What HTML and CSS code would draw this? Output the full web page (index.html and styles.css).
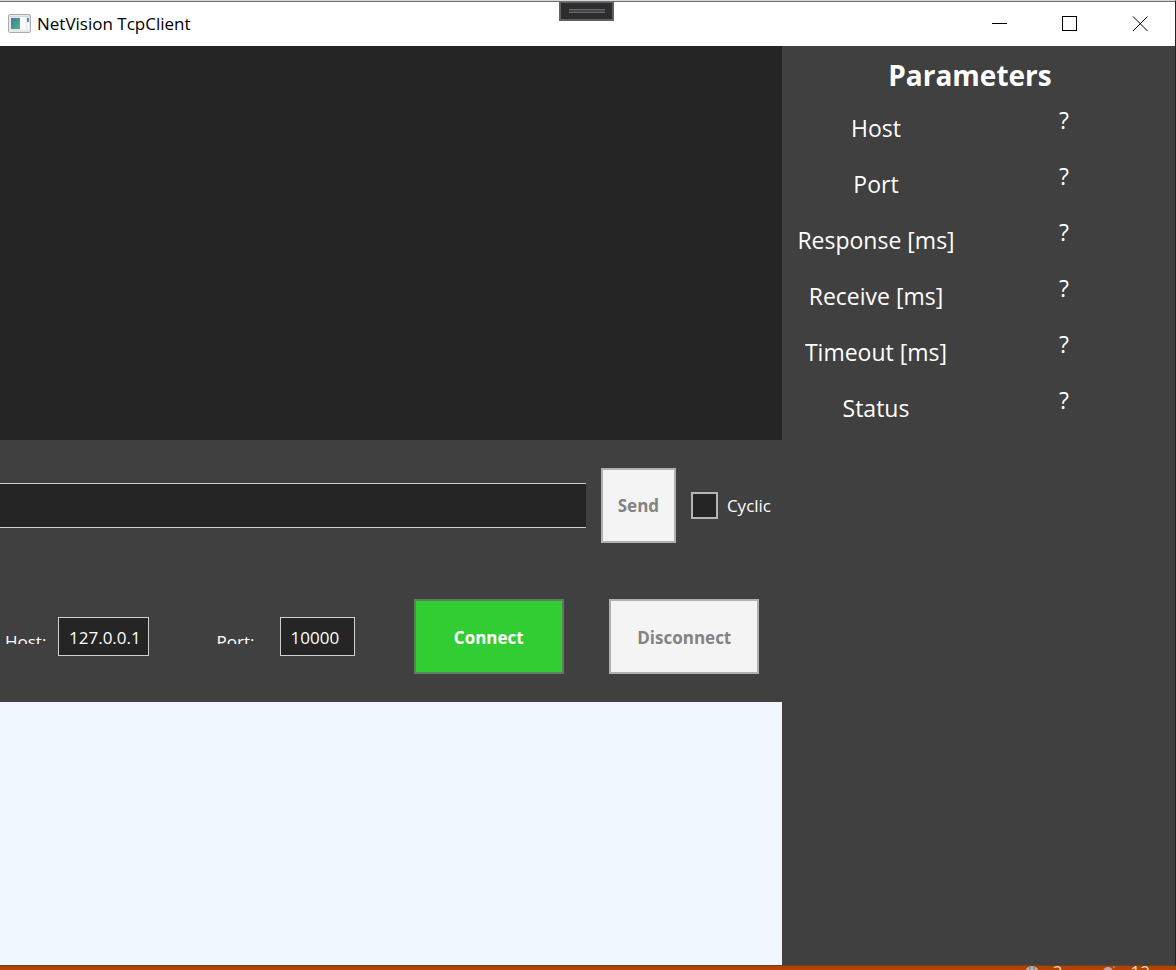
FILE: index.html
```html
<!DOCTYPE html>
<html lang="en">
<head>
<meta charset="utf-8">
<title>NetVision TcpClient</title>
<link rel="stylesheet" href="styles.css">
</head>
<body>
<div class="window">
  <header class="titlebar">
    <svg class="app-icon" width="24" height="20" viewBox="0 0 24 20" aria-hidden="true">
      <defs><linearGradient id="pane" x1="0" y1="0" x2="1" y2="1"><stop offset="0" stop-color="#4a78a0"/><stop offset="0.5" stop-color="#48988c"/><stop offset="1" stop-color="#5fb08c"/></linearGradient></defs>
      <rect x="0.5" y="0.5" width="22" height="18" rx="1.5" fill="#e6e8ea" stroke="#a9adb2"/>
      <rect x="2" y="2" width="19" height="1" fill="#d5d8dc"/>
      <rect x="3" y="4" width="9" height="11" fill="url(#pane)"/>
      <rect x="12" y="3" width="6" height="13" fill="#f8f8f8"/>
      <rect x="19" y="4" width="2" height="4" fill="#5f8f9f"/>
      <rect x="19" y="8" width="2" height="8" fill="#f4f5f6"/>
    </svg>
    <h1 class="title">NetVision TcpClient</h1>
    <div class="window-buttons">
      <button class="window-button" aria-label="Minimize"><svg width="16" height="16" viewBox="0 0 16 16"><path d="M0 7.5H15" stroke="#000"/></svg></button>
      <button class="window-button" aria-label="Maximize"><svg width="16" height="16" viewBox="0 0 16 16"><rect x="0.5" y="0.5" width="14" height="14" fill="none" stroke="#000"/></svg></button>
      <button class="window-button" aria-label="Close"><svg width="16" height="16" viewBox="0 0 16 16"><path d="M1 0.5L15.5 15M15.5 0.5L1 15" stroke="#000"/></svg></button>
    </div>
    <button class="debug-handle" aria-label="Expand toolbar"><span class="grip"></span></button>
  </header>
  <main class="content">
    <div class="left">
      <section class="log"></section>
      <form class="send-row">
        <input class="field message" type="text" aria-label="Message">
        <button class="button send" type="button" disabled>Send</button>
        <label class="cyclic"><input class="checkbox" type="checkbox"><span class="cyclic-text">Cyclic</span></label>
      </form>
      <form class="connect-row">
        <div class="cell host-cell">
          <label class="clipped" for="host">Host:</label>
          <input class="field host" id="host" type="text" value="127.0.0.1">
        </div>
        <div class="cell port-cell">
          <label class="clipped" for="port">Port:</label>
          <input class="field port" id="port" type="text" value="10000">
        </div>
        <div class="cell"><button class="button connect" type="button">Connect</button></div>
        <div class="cell"><button class="button disconnect" type="button" disabled>Disconnect</button></div>
      </form>
      <section class="output"></section>
    </div>
    <aside class="parameters">
      <h2 class="heading">Parameters</h2>
      <table class="values">
        <tr><th scope="row">Host</th><td>?</td></tr>
        <tr><th scope="row">Port</th><td>?</td></tr>
        <tr><th scope="row">Response [ms]</th><td>?</td></tr>
        <tr><th scope="row">Receive [ms]</th><td>?</td></tr>
        <tr><th scope="row">Timeout [ms]</th><td>?</td></tr>
        <tr><th scope="row">Status</th><td>?</td></tr>
      </table>
    </aside>
  </main>
</div>
<footer class="statusbar">
  <svg width="14" height="14" viewBox="0 0 14 14" aria-hidden="true"><circle cx="7" cy="7" r="7" fill="#b5b0b0"/><path d="M5 1v3M9 1v3" stroke="#777"/></svg>
  <span class="count">2</span>
  <svg class="second" width="14" height="14" viewBox="0 0 14 14" aria-hidden="true"><circle cx="5" cy="6" r="5" fill="#b5b0b0"/><path d="M11 0v2" stroke="#b5b0b0"/></svg>
  <span class="count">12</span>
</footer>
</body>
</html>
```

FILE: styles.css
```css
* { box-sizing: border-box; }

body {
  margin: 0;
  height: 100vh;
  display: flex;
  flex-direction: column;
  overflow: hidden;
  background: #252525;
  color: #fff;
  font: 17px/26px "Open Sans", "Noto Sans", sans-serif;
}

button, input { font: inherit; color: inherit; margin: 0; }

.window {
  flex: 1;
  min-height: 0;
  display: flex;
  flex-direction: column;
  border-top: 1px solid #d5d8d5;
  border-right: 1px solid #252525;
  border-bottom: 1px solid #6b4020;
}

.titlebar {
  position: relative;
  display: flex;
  align-items: center;
  height: 45px;
  padding-left: 8px;
  gap: 5px;
  background: #fff;
  color: #000;
  border-top: 1px solid #707070;
}

.title { margin: 0; font-size: 17px; font-weight: 400; }

.window-buttons { display: flex; margin-left: auto; }

.window-button {
  display: grid;
  place-items: center;
  width: 70px;
  height: 44px;
  padding: 0;
  border: 0;
  background: none;
}

.debug-handle {
  position: absolute;
  top: 0;
  left: 559px;
  width: 55px;
  height: 19px;
  display: grid;
  place-items: center;
  padding: 0;
  border: 2px solid #606060;
  border-top-width: 1px;
  background: #2d2d30;
}

.grip { width: 36px; height: 4px; border: 1px solid #68686c; border-width: 1px 0; background: #46464a; }

.content {
  flex: 1;
  min-height: 0;
  display: grid;
  grid-template-columns: 2fr 1fr;
  padding-right: 2px;
  background: #404040;
}

.left { display: grid; grid-template-rows: 3fr 1fr 1fr 2fr; min-width: 0; }
.log { background: #252525; }
.output { background: #f0f7ff; }

.field {
  background: #252525;
  border: 1px solid #d0d0d0;
  border-radius: 0;
  padding: 2px 10px 0;
}

.send-row { display: flex; align-items: center; padding-right: 11px; }
.message { flex: 1; min-width: 0; height: 45px; border-width: 1px 0; }

.button {
  width: 150px;
  height: 75px;
  padding: 2px 0 0;
  border: 2px solid #707070;
  border-radius: 0;
  font-weight: 700;
}

.button:disabled { background: #f4f4f4; border-color: #adb2b5; color: #838383; }
.send { width: 75px; margin: 0 15px; }
.connect { background: #32cd32; border-color: #5a7f5a; }

.cyclic { display: flex; align-items: center; gap: 9px; }
.cyclic-text { padding-top: 2px; }

.checkbox {
  appearance: none;
  width: 27px;
  height: 27px;
  background: #252525;
  border: 2px solid #b5b5b5;
}

.connect-row { display: grid; grid-template-columns: repeat(4, 1fr); }
.cell { display: flex; align-items: center; justify-content: center; }
.host-cell { justify-content: flex-start; padding-left: 5px; }
.port-cell { justify-content: flex-start; padding-left: 21px; }

.clipped { height: 15px; overflow: hidden; }
.host-cell .clipped { width: 53px; }
.port-cell .clipped { width: 63px; }
.host, .port { height: 39px; }
.host { width: 91px; }
.port { width: 75px; }

.parameters { padding: 11px 15px 0 0; }
.heading { margin: 0; font-size: 28px; line-height: 36px; text-align: center; }

.values { width: 100%; table-layout: fixed; border-collapse: collapse; margin-top: 8px; font-size: 23px; line-height: 32px; }
.values tr { height: 56px; }
.values th { padding: 11px 0 0; font-weight: 400; vertical-align: top; text-align: center; white-space: nowrap; }
.values td { padding: 3px 0 0; vertical-align: top; text-align: center; }

.statusbar {
  display: flex;
  align-items: flex-start;
  justify-content: flex-end;
  gap: 14px;
  height: 4px;
  padding-right: 26px;
  overflow: hidden;
  background: #b04400;
  color: #f0d8c8;
}

.second { margin-left: 26px; }
.count { line-height: 12px; }
```
